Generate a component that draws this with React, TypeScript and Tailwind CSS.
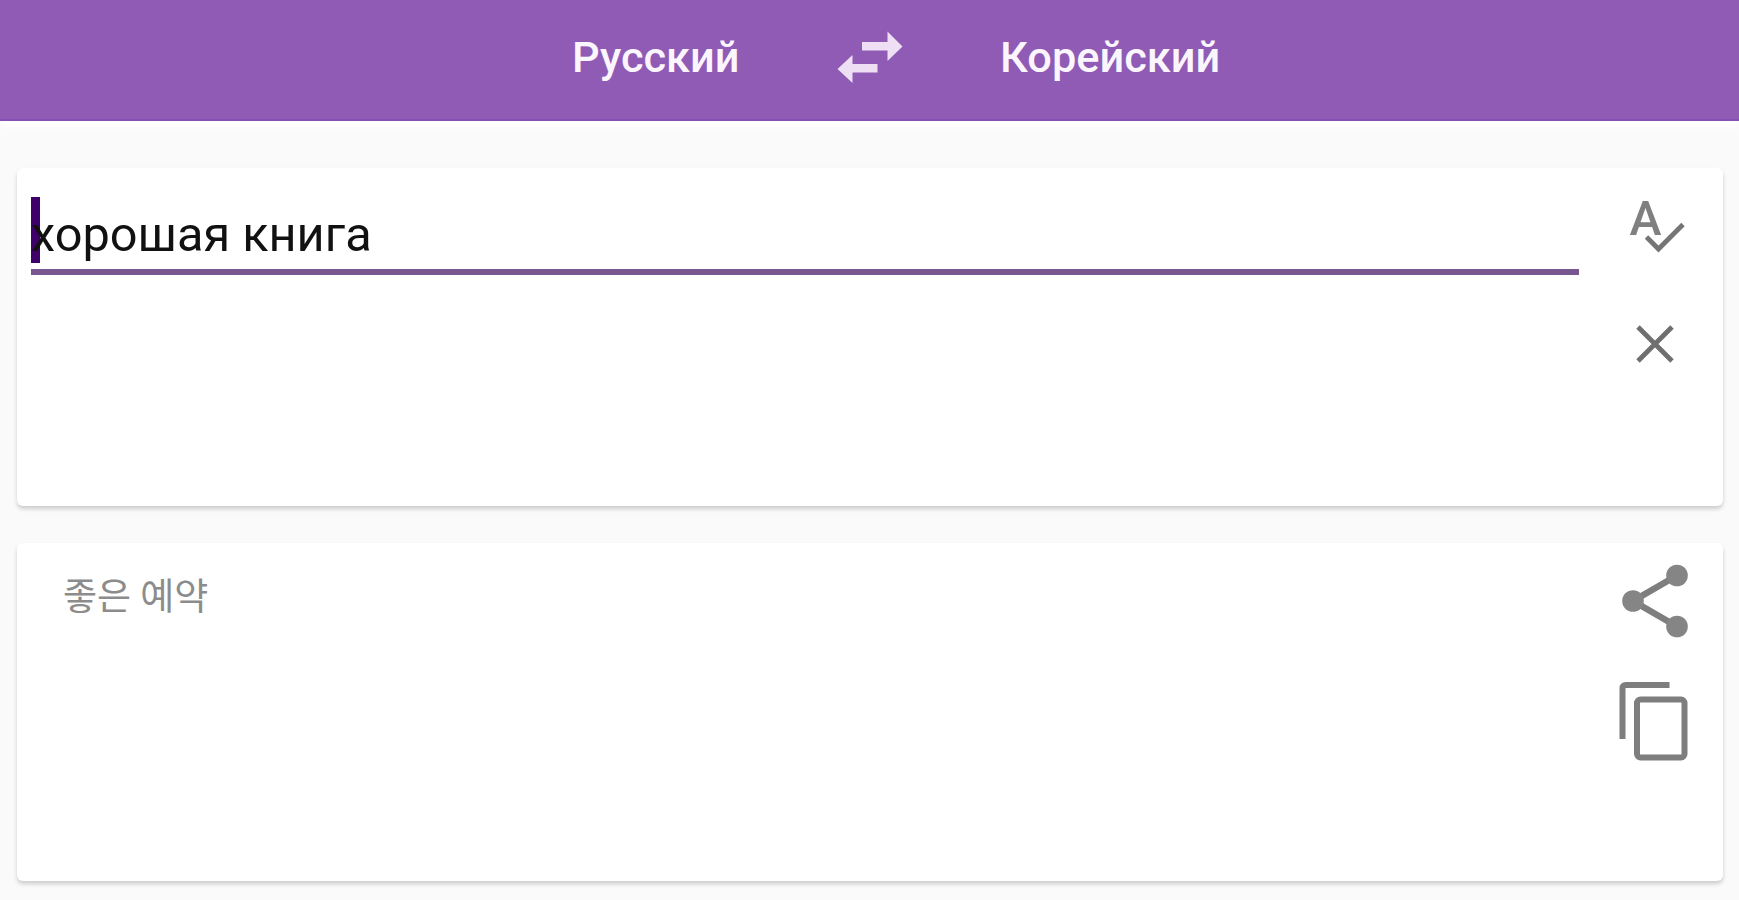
import React, { useState } from 'react';

const SwapIcon: React.FC = () => (
  <svg width="66" height="54" viewBox="0 0 66 54" fill="#eedff5">
    <path d="M25 12H50.5V1.5L65.5 16.5L50.5 31V20.5H25Z" />
    <path d="M40.5 34H15.5V25L0.5 39L15.5 53V42.5H40.5Z" />
  </svg>
);

const SpellcheckIcon: React.FC = () => (
  <svg width="56" height="64" viewBox="0 -10 56 64" className="overflow-visible">
    <text x="-0.5" y="35.5" fontSize="49" fontWeight="500" fontFamily="Roboto, sans-serif" textLength="32" lengthAdjust="spacingAndGlyphs" fill="#808080">A</text>
    <path d="M16.5 38L28.5 50L53 25.5" fill="none" stroke="#757575" strokeWidth="4.8" />
  </svg>
);

const CloseIcon: React.FC = () => (
  <svg width="38" height="38" viewBox="0 0 38 38" fill="none" stroke="#6f6f6f" strokeWidth="4.8">
    <path d="M2 2L36 36M36 2L2 36" />
  </svg>
);

const ShareIcon: React.FC = () => (
  <svg width="66" height="74" viewBox="0 0 66 74" fill="#858585" stroke="#7e7e7e">
    <path d="M55 11.5L11 37L55 62.5" fill="none" strokeWidth="6.5" />
    <circle cx="11" cy="37" r="10.8" stroke="none" />
    <circle cx="55" cy="11.5" r="10.8" stroke="none" />
    <circle cx="55" cy="62.5" r="10.8" stroke="none" />
  </svg>
);

const CopyIcon: React.FC = () => (
  <svg width="70" height="80" viewBox="0 0 70 80" fill="none" stroke="#7e7e7e" strokeWidth="6">
    <path d="M4.5 58V7.5Q4.5 4 8 4H51.5" />
    <rect x="19" y="18.5" width="47.5" height="58" rx="3.5" />
  </svg>
);

const App: React.FC = () => {
  const [source, setSource] = useState('хорошая книга');

  return (
    <div className="h-screen overflow-hidden bg-[#fafafa] font-[Roboto,'Noto_Sans_CJK_KR',sans-serif]">
      {/* Language bar */}
      <header className="flex h-[121px] items-start border-b-2 border-[#8850b4] bg-[#8f5bb5] pt-[30px] pl-[572px] text-[43.3px] leading-[56px] font-medium text-[#fbf5fd] shadow-[0_6px_6px_#ffffff]">
        <button className="w-[265px] text-left whitespace-nowrap">Русский</button>
        <button className="w-[163px]">
          <SwapIcon />
        </button>
        <button className="text-left whitespace-nowrap">Корейский</button>
      </header>

      <main className="flex flex-col gap-[37px] pt-[47px] pr-4 pl-[17px]">
        {/* Source text */}
        <section className="flex h-[338px] rounded-md bg-white pl-3.5 shadow-[0_3px_4px_rgba(0,0,0,0.18)]">
          <div className="relative mt-[29px] h-[78px] w-[1548px] border-b-6 border-[#78568f]">
            <span className="absolute top-0 left-0 h-[66px] w-[9px] bg-[#3e0069]"></span>
            <input
              className="relative block h-[72px] w-full bg-transparent pt-1 text-[48.7px] text-[#111111] outline-none"
              value={source}
              onChange={(e) => setSource(e.target.value)}
            />
          </div>
          <div className="flex flex-col pt-[21px] pl-[51px]">
            <button>
              <SpellcheckIcon />
            </button>
            <button className="mt-[72px] ml-1.5">
              <CloseIcon />
            </button>
          </div>
        </section>

        {/* Translation */}
        <section className="flex h-[338px] justify-between rounded-md bg-white pr-[35px] pl-[46px] shadow-[0_3px_4px_rgba(0,0,0,0.18)]">
          <p className="pt-7 text-[37px] leading-[54px] text-[#8c8c8c]">좋은 예약</p>
          <div className="flex flex-col items-end pt-[21px]">
            <button>
              <ShareIcon />
            </button>
            <button className="mt-[43px]">
              <CopyIcon />
            </button>
          </div>
        </section>
      </main>
    </div>
  );
};

export default App;
